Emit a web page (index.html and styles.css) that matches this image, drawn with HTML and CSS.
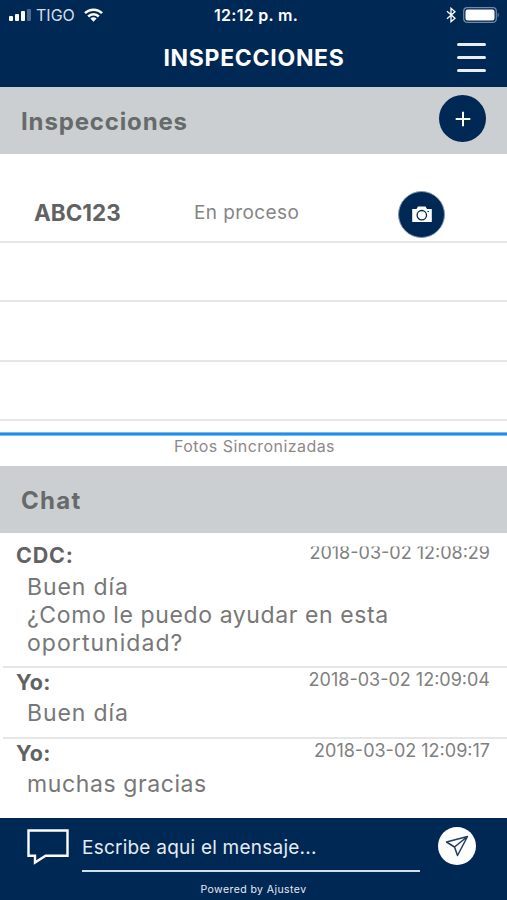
FILE: index.html
```
<!DOCTYPE html>
<html lang="es">
<head>
<meta charset="utf-8">
<title>Inspecciones</title>
<link rel="stylesheet" href="styles.css">
</head>
<body>
<div class="app">
  <header class="top">
    <div class="status">
      <div class="carrier">
        <svg class="signal" width="23" height="12" viewBox="0 0 23 12"><g fill="#fff"><rect y="7" width="4" height="5" rx="1"/><rect x="6" y="5" width="4" height="7" rx="1"/><rect x="12" y="2" width="4" height="10" rx="1"/><rect x="18" width="4" height="12" rx="1" opacity=".3"/></g></svg>
        <span class="carrier-name">TIGO</span>
        <svg class="wifi" width="19" height="14" viewBox="0 0 19 14"><g fill="none" stroke="#fff" stroke-width="2.500"><path d="M1 5.200a12 12 0 0 1 17 0"/><path d="M4.200 8.500a7.500 7.500 0 0 1 10.600 0"/></g><path fill="#fff" d="M6.400 10.600a4.400 4.400 0 0 1 6.200 0L9.500 13.700z"/></svg>
      </div>
      <span class="clock">12:12 p. m.</span>
      <div class="power">
        <svg width="10" height="16" viewBox="0 0 10 16"><path fill="none" stroke="#fff" stroke-width="1.300" d="M1 4.300 9 11.300 5 14.700V1.300L9 4.700 1 11.700"/></svg>
        <svg width="37" height="16" viewBox="0 0 37 16"><rect x=".7" y=".7" width="32.600" height="14.600" rx="3.500" fill="none" stroke="#fff" stroke-opacity=".45" stroke-width="1.200"/><rect x="2.500" y="2.500" width="29" height="11" rx="2" fill="#fff"/><path d="M34.700 5.500q2 2.500 0 5z" fill="#fff" opacity=".5"/></svg>
      </div>
    </div>
    <div class="titlebar">
      <h1>INSPECCIONES</h1>
      <div class="menu"><i></i><i></i><i></i></div>
    </div>
  </header>
  <section class="band">
    <h2>Inspecciones</h2>
    <div class="round"><svg width="16" height="16" viewBox="0 0 16 16"><path d="M8 .7v14.600M.7 8h14.600" stroke="#fff" stroke-width="2"/></svg></div>
  </section>
  <section class="list">
    <div class="row first">
      <b class="plate">ABC123</b>
      <span class="state">En proceso</span>
      <div class="round cam"><svg width="20" height="17" viewBox="0 0 20 17"><path fill="#fff" d="M.2 3h4.300L6 .5h7.500L15 3h4.800v13H.2z"/><circle cx="9.800" cy="9.200" r="4.700" fill="none" stroke="#002855" stroke-width="1.300"/><circle cx="16.200" cy="5.500" r=".8" fill="#002855"/></svg></div>
    </div>
    <div class="row"></div>
    <div class="row"></div>
    <div class="row"></div>
  </section>
  <div class="progress"></div>
  <div class="sync">Fotos Sincronizadas</div>
  <section class="band"><h2 class="chat-title">Chat</h2></section>
  <section class="chat">
    <article class="msg opening">
      <b class="who cdc">CDC:</b><time class="cut">2018-03-02 12:08:29</time>
      <p><span>Buen día</span><br><span class="long">¿Como le puedo ayudar en esta</span><br><span class="wide">oportunidad?</span></p>
    </article>
    <article class="msg">
      <b class="who">Yo:</b><time>2018-03-02 12:09:04</time>
      <p><span>Buen día</span></p>
    </article>
    <article class="msg">
      <b class="who">Yo:</b><time>2018-03-02 12:09:17</time>
      <p><span class="long">muchas gracias</span></p>
    </article>
  </section>
  <footer class="bottom">
    <div class="compose">
      <svg class="bubble" width="42" height="36" viewBox="0 0 42 36"><path d="M1.500 1.500h39v25.300H18.600L8 33.600v-6.800H1.500z" fill="none" stroke="#fff" stroke-width="2.400"/></svg>
      <div class="field"><span>Escribe aqui el mensaje...</span></div>
      <div class="send"><svg width="24" height="22" viewBox="0 0 24 22"><path d="M1.500 7 22.500 1.500 12.500 20.500 9.500 12zM9.500 12 22.500 1.500" fill="none" stroke="#1d3d63" stroke-width="1.500" stroke-linejoin="round"/></svg></div>
    </div>
    <div class="credit">Powered by Ajustev</div>
  </footer>
</div>
</body>
</html>
```
FILE: styles.css
```
* { box-sizing: border-box; margin: 0; padding: 0; }
body { width: 507px; height: 900px; overflow: hidden; background: #fff; color: #757575; font-family: Inter, "Open Sans", sans-serif; }
.app { display: flex; flex-direction: column; height: 900px; }
svg { display: block; flex: none; }
span, b, time, h1, h2 { white-space: nowrap; }

.top { height: 87px; background: #002855; color: #fff; }
.status { height: 30px; display: grid; grid-template-columns: 1fr auto 1fr; align-items: center; padding: 0 7px 0 9px; }
.carrier { display: flex; align-items: center; }
.carrier-name { margin-left: 4px; font-size: 16px; color: #d5deea; }
.wifi { margin-left: 9px; }
.clock { margin-left: 3px; font-size: 16px; font-weight: 600; letter-spacing: 0.300px; }
.power { display: flex; justify-content: flex-end; align-items: center; gap: 7px; }
.titlebar { height: 55px; display: grid; grid-template-columns: 1fr auto 1fr; align-items: center; padding: 0 21px 0 22px; }
.titlebar h1 { grid-column: 2; font-size: 23px; font-weight: 700; line-height: 28px; letter-spacing: 0.700px; }
.menu { justify-self: end; width: 29px; height: 29px; display: flex; flex-direction: column; justify-content: space-between; }
.menu i { height: 3px; border-radius: 2px; background: #e9eff7; }

.band { height: 67px; background: #cccfd1; display: flex; align-items: center; justify-content: space-between; padding: 0 21px; color: #666a6b; }
.band h2 { margin-top: 2px; font-size: 24px; font-weight: 700; line-height: 28px; letter-spacing: 0.850px; }
.band .chat-title { letter-spacing: 1.300px; }
.round { width: 47px; height: 47px; border-radius: 50%; background: #002855; display: flex; align-items: center; justify-content: center; }
.band .round { margin-bottom: 4px; }

.list { height: 278px; overflow: hidden; }
.row { height: 59.500px; border-bottom: 2px solid #e6e6e6; }
.row.first { height: 88.500px; display: grid; grid-template-columns: 160px 204px 47px; padding: 32px 0 0 34px; align-items: center; }
.plate { font-size: 22.500px; margin-bottom: 2px; color: #626262; }
.state { font-size: 19px; margin-bottom: 1px; letter-spacing: 0.400px; color: #858585; }
.cam { margin-top: 2px; border: 1px solid #8798ad; }
.progress { height: 4px; background: #2b8be0; border: solid #6fbdf7; border-width: 1px 0; }
.sync { height: 30px; text-align: center; font-size: 16px; line-height: 20px; letter-spacing: 0.450px; padding-left: 2px; color: #8a8a8a; }

.chat { height: 285px; }
.msg { display: grid; grid-template-columns: 1fr auto; margin-left: 3px; padding: 0 17px 10px 13px; border-bottom: 2px solid #e6e6e6; }
.msg:last-child { border-bottom: 0; }
.opening { padding-top: 8px; padding-bottom: 9px; }
.who { font-size: 21.500px; line-height: 28px; letter-spacing: 0.300px; color: #626262; }
.cdc { letter-spacing: 0.800px; }
time { font-size: 18px; line-height: 24px; color: #808080; }
.cut { clip-path: inset(5.500px 0 0 0); }
.msg p { grid-column: 1 / -1; margin-top: 3px; padding-left: 11px; font-size: 23px; line-height: 28px; letter-spacing: 0.900px; color: #777; }
.opening p { margin-top: 4px; }
.msg .long { letter-spacing: 0.600px; }
.msg .wide { letter-spacing: 1.050px; }

.bottom { height: 82px; background: #002855; color: #e4ebf3; }
.compose { display: flex; padding-left: 27px; }
.bubble { margin-top: 11px; }
.field { width: 338px; height: 54px; margin-left: 13px; border-bottom: 2px solid #d3dfea; font-size: 19px; line-height: 60px; letter-spacing: 0.230px; }
.send { width: 38px; height: 38px; margin: 9px 0 0 18px; border-radius: 50%; background: #fff; display: flex; align-items: center; justify-content: center; }
.credit { text-align: center; font-size: 10.500px; line-height: 16px; margin-top: 10px; letter-spacing: 0.430px; }
```
